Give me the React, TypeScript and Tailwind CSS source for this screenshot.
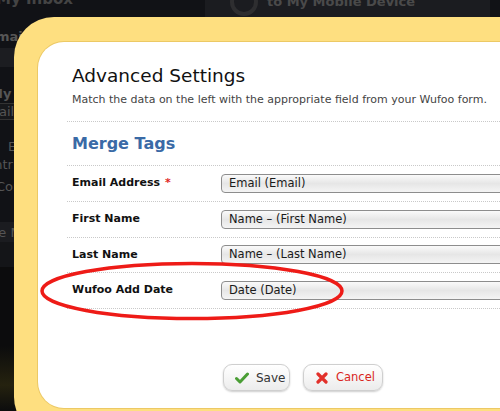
import React from "react";

function Check() {
  return (
    <svg width="14" height="12" viewBox="0 0 14 12">
      <path d="M1.5 6.5 L5 10 L12.5 2" fill="none" stroke="#4a9e35" strokeWidth="3" strokeLinecap="round" strokeLinejoin="round" />
    </svg>
  );
}

function Cross() {
  return (
    <svg width="12" height="12" viewBox="0 0 12 12">
      <path d="M2 2 L10 10 M10 2 L2 10" fill="none" stroke="#e2302a" strokeWidth="3.2" strokeLinecap="round" />
    </svg>
  );
}

function Row({ label, value, req }: { label: string; value: string; req?: boolean }) {
  return (
    <div className="flex h-[35.75px] items-center border-b border-dotted border-[#c9c9c9] pl-[5px]">
      <div className="w-[149px] shrink-0 text-[11px] font-bold text-[#111]">
        {label}
        {req && <span className="ml-[5px] text-[#e0261f]">*</span>}
      </div>
      <div className="flex h-[19px] flex-1 items-center rounded-l-[4px] border border-[#8d8d8d] bg-[linear-gradient(#fafafa,#e6e6e6_50%,#f4f4f4)] pl-[7px] text-[11.5px] text-[#1a1a1a]">
        {value}
      </div>
    </div>
  );
}

export default function App() {
  return (
    <div className="relative h-[411px] w-[500px] overflow-hidden bg-[#111216] font-['DejaVu_Sans',sans-serif]">
      {/* underlying page */}
      <div className="flex h-full">
        <div className="flex w-[205px] flex-col text-[13px] text-[#555]">
          <div className="-ml-[4px] -mt-[12px] h-[29px] text-[15px] font-bold text-[#444]">My Inbox</div>
          <div className="-ml-[13px] h-[31px] pt-[10px] font-bold">Email Alerts</div>
          <div className="h-[19px] bg-[#1c1d21]" />
          <div className="h-[17px]" />
          <div className="-ml-[10px] h-[19px] font-bold">My Tasks</div>
          <div className="-ml-[12px] h-[17px] border border-[#333] bg-[#17181b] leading-[15px] text-[#555]">Daily</div>
          <div className="h-[17px]" />
          <div className="h-[18px] pl-[8px]">Error</div>
          <div className="-ml-[14px] h-[22px]">Entries</div>
          <div className="-ml-[4px] h-[45px]">Con</div>
          <div className="-ml-[18px] h-[20px] bg-[#1b1c20] pt-[1px]">Use Mobile</div>
          <div className="h-[25px] bg-[#141518]" />
          <div className="flex-1 bg-[linear-gradient(#0c0c0d,#0c0c0d_55%,#25220f_82%,#0c0c0d)]" />
        </div>
        <div className="flex h-[17px] w-[285px] items-center bg-[#1b1c20] pl-[25px] text-[13px] font-bold text-[#4a4a4a]">
          <div className="-mt-[14px] mr-[9px] h-[28px] w-[28px] shrink-0 rounded-full border-[4px] border-[#2e2e30]" />
          <span className="-mt-[14px]">to My Mobile Device</span>
        </div>
      </div>

      {/* modal */}
      <div className="absolute left-[14px] top-[17px] h-[420px] w-[560px] rounded-[40px] bg-[#fedf80] pl-[24px] pt-[25px]">
        <div className="h-[366px] rounded-[26px] bg-white pl-[29px] pt-[22px] shadow-[0_0_0_1px_#ecc965]">
          <div className="pl-[5px]">
            <div className="h-[24px] text-[18.5px] leading-[24px] text-[#111]">Advanced Settings</div>
            <div className="mt-[5px] h-[14px] text-[11px] leading-[14px] text-[#444]">
              Match the data on the left with the appropriate field from your Wufoo form.
            </div>
          </div>
          <div className="mt-[14px] border-t border-dotted border-[#c9c9c9]" />
          <div className="h-[44px] border-b border-dotted border-[#c9c9c9] pl-[5px] pt-[11px] text-[16px] font-bold leading-[22px] text-[#3a6aa6]">
            Merge Tags
          </div>
          <Row label="Email Address" value="Email (Email)" req />
          <Row label="First Name" value="Name – (First Name)" />
          <Row label="Last Name" value="Name – (Last Name)" />
          <Row label="Wufoo Add Date" value="Date (Date)" />
          <div className="mt-[55px] flex gap-[13px] pl-[156px]">
            <button className="flex h-[27px] w-[67px] items-center gap-[7px] rounded-[9px] border border-[#cfcfcf] bg-[linear-gradient(#ffffff,#ececec)] pl-[11px] text-[12px] text-[#333] shadow-[0_1px_2px_rgba(0,0,0,0.2)]">
              <Check />
              Save
            </button>
            <button className="flex h-[27px] w-[80px] items-center gap-[8px] rounded-[9px] border border-[#cfcfcf] bg-[linear-gradient(#ffffff,#ececec)] pl-[12px] text-[11.5px] text-[#d9251d] shadow-[0_1px_2px_rgba(0,0,0,0.2)]">
              <Cross />
              Cancel
            </button>
          </div>
        </div>
      </div>

      {/* red annotation ellipse */}
      <svg className="pointer-events-none absolute left-0 top-0" width="500" height="411">
        <ellipse cx="192" cy="291" rx="150" ry="27.5" fill="none" stroke="#ee1b17" strokeWidth="3.5" />
      </svg>
    </div>
  );
}
